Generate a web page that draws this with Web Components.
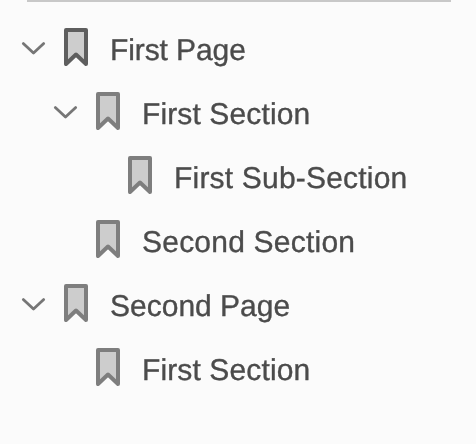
<!DOCTYPE html>
<html lang="en">
<head>
<meta charset="utf-8">
<title>Bookmarks</title>
<style>
html, body { margin: 0; height: 100%; background: #fbfbfb; overflow: hidden; }
</style>
</head>
<body>
<bookmark-panel>
  <bookmark-item open current style="--tracking:-.1px">First Page
    <bookmark-item slot="children" open style="--tracking:.12px">First Section
      <bookmark-item slot="children" style="--tracking:.2px">First Sub-Section</bookmark-item>
    </bookmark-item>
    <bookmark-item slot="children" style="--tracking:.22px">Second Section</bookmark-item>
  </bookmark-item>
  <bookmark-item open style="--tracking:0px">Second Page
    <bookmark-item slot="children" style="--tracking:.12px">First Section</bookmark-item>
  </bookmark-item>
</bookmark-panel>

<template id="panel">
  <style>
    :host { display: block; height: 100%; background: #fbfbfb; color: #4b4b4b;
      font: 30px/64px "Liberation Sans", Arial, sans-serif; text-rendering: geometricPrecision; }
    .rule { height: 2px; margin: 0 25px 15px 27px; background: #c8c8c8; }
    .tree { padding-left: 20px; }
  </style>
  <div class="rule"></div>
  <div class="tree"><slot></slot></div>
</template>

<template id="item">
  <style>
    :host { display: block; --outline: #7e7e7e; --arrow: #767676; }
    :host([current]) { --outline: #5e5e5e; }
    .row { display: flex; align-items: flex-start; height: 64px; white-space: nowrap; }
    svg { display: block; flex: none; fill: none; }
    .toggle { width: 28px; height: 16px; margin: 24px 16px 0 0; visibility: hidden; }
    :host([open]) .toggle { visibility: visible; }
    .toggle path { stroke: var(--arrow); stroke-width: 2.8; stroke-linecap: round; stroke-linejoin: round; }
    .mark { width: 24px; height: 38px; margin: 11px 22px 0 0; }
    .mark path { fill: #cdcdcd; stroke: var(--outline); stroke-width: 4; stroke-linejoin: round; }
    .label { display: block; margin-top: 2px; letter-spacing: var(--tracking); will-change: transform; -webkit-text-stroke: .35px currentColor; }
    .children { padding-left: 32px; }
  </style>
  <div class="row">
    <svg class="toggle" viewBox="0 0 28 16"><path d="M3.3 2.6 L13.5 12.1 L23.7 2.6"/></svg>
    <svg class="mark" viewBox="0 0 24 38"><path d="M2 2 H22 V36 L12 26.5 L2 36 Z"/></svg>
    <span class="label"><slot></slot></span>
  </div>
  <div class="children"><slot name="children"></slot></div>
</template>

<script>
class BookmarkPanel extends HTMLElement {
  constructor() {
    super();
    this.attachShadow({ mode: "open" }).append(document.getElementById("panel").content.cloneNode(true));
  }
}
class BookmarkItem extends HTMLElement {
  constructor() {
    super();
    this.attachShadow({ mode: "open" }).append(document.getElementById("item").content.cloneNode(true));
  }
}
customElements.define("bookmark-panel", BookmarkPanel);
customElements.define("bookmark-item", BookmarkItem);
</script>
</body>
</html>
